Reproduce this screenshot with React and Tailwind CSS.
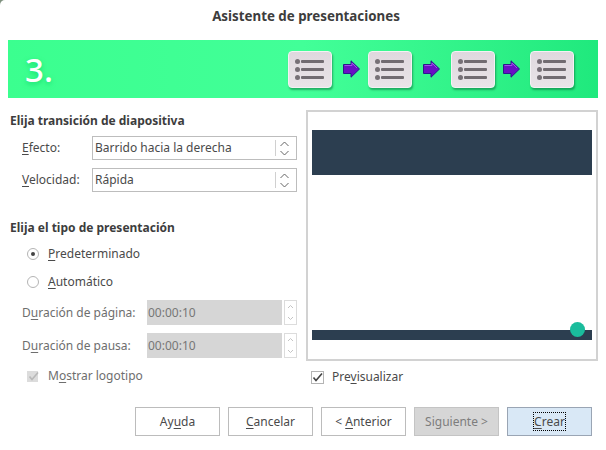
const F = "font-['Noto_Sans',sans-serif]";

function M({ children }) {
  return <span className="underline decoration-1 underline-offset-2">{children}</span>;
}

function SlideIcon() {
  return (
    <div className="flex h-[37px] w-[44px] flex-col justify-center gap-[3px] rounded-[4px] border border-[#f4f1f4] bg-gradient-to-b from-[#dfd8de] to-[#e9e4e8] pl-[6px] shadow-[1px_2px_2px_rgba(0,80,40,0.45)]">
      {[0, 1, 2].map((i) => (
        <div key={i} className="flex items-center gap-[1px]">
          <div className="h-[5px] w-[5px] rounded-full bg-[#767076]" />
          <div className="h-[3px] w-[23px] rounded-[1px] bg-[#716b71]" />
        </div>
      ))}
    </div>
  );
}

function Arrow() {
  return (
    <svg width="17" height="18" viewBox="0 0 17 18">
      <path d="M0.5 4.5H8V0.8L16.5 9L8 17.2V13.5H0.5Z" fill="#6a0fc4" stroke="#2a1a8c" strokeWidth="1" />
      <path d="M1.5 5.5H9V3L14 8" fill="none" stroke="#a24cec" strokeWidth="1" />
    </svg>
  );
}

function Chevrons() {
  return (
    <svg width="11" height="17" viewBox="0 0 11 17" fill="none" stroke="#666" strokeWidth="1">
      <path d="M1.5 6L5.5 2L9.5 6" />
      <path d="M1.5 11L5.5 15L9.5 11" />
    </svg>
  );
}

function Combo({ value }) {
  return (
    <div className="flex h-[24px] w-[205px] items-center border border-[#bdbdbd] bg-white pl-[2px] pr-[6px]">
      <span className="flex-1 whitespace-nowrap leading-[18px]">{value}</span>
      <div className="flex h-[16px] items-center border-l border-[#d0d0d0] pl-[3px]">
        <Chevrons />
      </div>
    </div>
  );
}

function ComboRow({ label, value }) {
  return (
    <div className="flex h-[24px] items-center pl-[22px]">
      <span className="w-[70px] leading-[18px]">{label}</span>
      <Combo value={value} />
    </div>
  );
}

function SpinRow({ label }) {
  return (
    <div className="flex h-[25px] items-center pl-[22px] text-[#6e6e6e]">
      <span className="w-[125px] leading-[18px]">{label}</span>
      <div className="flex h-[25px] w-[135px] items-center bg-[#d6d6d6] pl-[1px] text-[#777]">00:00:10</div>
      <div className="ml-[2px] flex h-[25px] w-[13px] flex-col items-center justify-between border border-[#dcdcdc] py-[3px]">
        <svg width="7" height="5" viewBox="0 0 7 5" fill="none" stroke="#c4c4c4"><path d="M1 4L3.5 1.5L6 4" /></svg>
        <svg width="7" height="5" viewBox="0 0 7 5" fill="none" stroke="#c4c4c4"><path d="M1 1L3.5 3.5L6 1" /></svg>
      </div>
    </div>
  );
}

function Radio({ checked, children }) {
  return (
    <div className="flex h-[20px] items-center pl-[27px]">
      <div className="flex h-[12px] w-[12px] items-center justify-center rounded-full border border-[#b4b4b4]">
        {checked && <div className="h-[4px] w-[4px] rounded-full bg-[#444]" />}
      </div>
      <span className="ml-[9px] leading-[18px]">{children}</span>
    </div>
  );
}

function Check({ disabled }) {
  return (
    <svg width="13" height="13" viewBox="0 0 13 13" fill="none">
      {disabled ? (
        <rect x="0" y="1" width="11" height="11" fill="#dcdcdc" />
      ) : (
        <rect x="0.5" y="0.5" width="12" height="12" stroke="#b4b4b4" />
      )}
      <path d="M2.5 6.5L5 9.5L11 2.5" stroke={disabled ? "#b8b8b8" : "#444"} strokeWidth="1.6" />
    </svg>
  );
}

function Btn({ children, cls = "border-[#bcbcbc] bg-white" }) {
  return (
    <div className={`flex h-[29px] w-[85px] items-center justify-center border ${cls}`}>
      <span className="whitespace-pre">{children}</span>
    </div>
  );
}

export default function App() {
  return (
    <div className={`${F} h-[450px] w-[606px] overflow-hidden bg-[#7f917f]`}>
      <div className="h-[450px] w-[606px] rounded-tl-[5px] bg-white text-[12px] leading-none text-[#4a4a4a]">
        <div className="flex h-[40px] items-center justify-center pb-[6px] pl-[6px] text-[13.33px] font-bold text-[#3d3d3d]">
          Asistente de presentaciones
        </div>

        <div className="mx-[8px] flex h-[58px] items-center bg-gradient-to-r from-[#3bff8f] via-[#42ff98] to-[#1fe97d] pl-[17px] pr-[24px]">
          <span className="text-[33px] font-medium text-white [text-shadow:0_2px_5px_rgba(0,200,90,0.6)]">3.</span>
          <div className="ml-auto flex items-center">
            <SlideIcon />
            <div className="ml-[11px] mr-[8px] flex"><Arrow /></div>
            <SlideIcon />
            <div className="ml-[11px] mr-[11px] flex"><Arrow /></div>
            <SlideIcon />
            <div className="ml-[8px] mr-[10px] flex"><Arrow /></div>
            <SlideIcon />
          </div>
        </div>

        <div className="flex h-[309px]">
          <div className="w-[306px] shrink-0">
            <div className="ml-[10px] mt-[17px] font-bold text-[#3d3d3d]">Elija transición de diapositiva</div>
            <div className="mt-[9px] flex flex-col gap-[8px]">
              <ComboRow label={<><M>E</M>fecto:</>} value="Barrido hacia la derecha" />
              <ComboRow label={<><M>V</M>elocidad:</>} value="Rápida" />
            </div>
            <div className="ml-[10px] mt-[30px] font-bold text-[#3d3d3d]">Elija el tipo de presentación</div>
            <div className="mt-[10px] flex flex-col gap-[8px]">
              <Radio checked><M>P</M>redeterminado</Radio>
              <Radio><M>A</M>utomático</Radio>
            </div>
            <div className="mt-[8px] flex flex-col gap-[8px]">
              <SpinRow label={<>D<M>u</M>ración de página:</>} />
              <SpinRow label={<>D<M>u</M>ración de pausa:</>} />
            </div>
            <div className="mt-[9px] flex items-center pl-[27px] text-[#6e6e6e]">
              <Check disabled />
              <span className="ml-[8px] leading-[18px]">M<M>o</M>strar logotipo</span>
            </div>
          </div>

          <div className="w-[292px] shrink-0 pt-[12px]">
            <div className="relative flex h-[251px] flex-col justify-between border-2 border-[#d2d2d2] px-[4px] pb-[19px] pt-[18px]">
              <div className="h-[45px] bg-[#2c3e50]" />
              <div className="h-[10px] bg-[#2c3e50]" />
              <div className="absolute bottom-[22px] right-[11px] h-[15px] w-[15px] rounded-full bg-[#1abc9c]" />
            </div>
            <div className="mt-[7px] flex items-center pl-[5px]">
              <Check />
              <span className="ml-[8px] leading-[18px]">Pre<M>v</M>isualizar</span>
            </div>
          </div>
        </div>

        <div className="flex justify-end gap-[8px] pr-[14px]">
          <Btn>Ay<M>u</M>da</Btn>
          <Btn><M>C</M>ancelar</Btn>
          <Btn>{"< "}<M>A</M>nterior</Btn>
          <Btn cls="border-[#c4c4c4] bg-[#d6d6d6] text-[#7d7d7d]">Siguiente &gt;</Btn>
          <Btn cls="border-[#9aa5b4] bg-[#d9e8f6]">
            <span className="outline-1 outline-dotted outline-black"><M>C</M>rear</span>
          </Btn>
        </div>
      </div>
    </div>
  );
}
